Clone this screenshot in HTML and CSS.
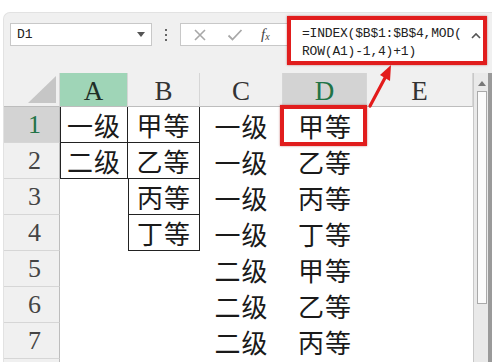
FILE: index.html
```
<!DOCTYPE html>
<html lang="zh">
<head>
<meta charset="utf-8">
<link rel="stylesheet" href="styles.css">
</head>
<body>
<div class="app">
  <div class="fbar">
    <div class="namebox"><span class="name">D1</span><span class="caret"></span></div>
    <div class="dots"><i></i><i></i><i></i></div>
    <div class="fxpart">
      <svg class="ic" width="14" height="14" viewBox="0 0 14 14"><path d="M2 2L12 12M12 2L2 12" stroke="#a8a8a8" stroke-width="1.6" fill="none"/></svg>
      <svg class="ic" width="16" height="14" viewBox="0 0 16 14"><path d="M1.5 7.5L5.5 11.5L14.5 2" stroke="#a8a8a8" stroke-width="1.8" fill="none"/></svg>
      <span class="fx">f<sub>x</sub></span>
    </div>
    <div class="formula">
      <div class="ftext">=INDEX($B$1:$B$4,MOD(<br>ROW(A1)-1,4)+1)</div>
      <svg class="up" width="10" height="7" viewBox="0 0 10 7"><path d="M1 6L5 2L9 6" stroke="#555" stroke-width="1.6" fill="none"/></svg>
    </div>
  </div>
  <div class="sheetwrap">
    <div class="sheet">
      <div class="corner"><span class="tri"></span></div>
      <div class="ch ch-a">A</div>
      <div class="ch">B</div>
      <div class="ch">C</div>
      <div class="ch ch-sel">D</div>
      <div class="ch">E</div>

      <div class="rh rh-sel">1</div>
      <div class="c bd bd-top">一级</div>
      <div class="c bd bd-top nl">甲等</div>
      <div class="c">一级</div>
      <div class="c mark">甲等</div>
      <div class="c"></div>

      <div class="rh">2</div>
      <div class="c bd">二级</div>
      <div class="c bd nl">乙等</div>
      <div class="c">一级</div>
      <div class="c">乙等</div>
      <div class="c"></div>

      <div class="rh">3</div>
      <div class="c"></div>
      <div class="c bd">丙等</div>
      <div class="c">一级</div>
      <div class="c">丙等</div>
      <div class="c"></div>

      <div class="rh">4</div>
      <div class="c"></div>
      <div class="c bd">丁等</div>
      <div class="c">一级</div>
      <div class="c">丁等</div>
      <div class="c"></div>

      <div class="rh">5</div>
      <div class="c"></div>
      <div class="c"></div>
      <div class="c">二级</div>
      <div class="c">甲等</div>
      <div class="c"></div>

      <div class="rh">6</div>
      <div class="c"></div>
      <div class="c"></div>
      <div class="c">二级</div>
      <div class="c">乙等</div>
      <div class="c"></div>

      <div class="rh">7</div>
      <div class="c"></div>
      <div class="c"></div>
      <div class="c">二级</div>
      <div class="c">丙等</div>
      <div class="c"></div>

      <div class="rh"></div>
      <div class="c"></div>
      <div class="c"></div>
      <div class="c"></div>
      <div class="c"></div>
      <div class="c"></div>
    </div>
    <div class="vscroll">
      <div class="sb-arrow"><svg width="8" height="5" viewBox="0 0 8 5"><path d="M0 5L4 0L8 5Z" fill="#777"/></svg></div>
      <div class="thumb"></div>
    </div>
  </div>
  <svg class="arrow" width="40" height="50" viewBox="0 0 40 50">
    <path d="M4 44L20 14" stroke="#e31b1b" stroke-width="3.2" fill="none" stroke-linecap="round"/>
    <path d="M25 3L14 13L24 19Z" fill="#e31b1b"/>
  </svg>
</div>
</body>
</html>
```
FILE: styles.css
```
* { box-sizing: border-box; }
html, body { margin: 0; padding: 0; }
body {
  width: 492px;
  height: 362px;
  overflow: hidden;
  background: #ffffff;
  font-family: "Liberation Serif", serif;
}
.app {
  position: relative;
  margin: 12px 0 0 3px;
  height: 350px;
  background: #f0f0f0;
  border-top-left-radius: 7px;
  border-top: 1px solid #e2e2e2;
  border-left: 1px solid #e2e2e2;
  overflow: hidden;
}
.fbar {
  height: 60px;
  display: flex;
  align-items: flex-start;
  padding: 0 0 0 6px;
}
.namebox {
  margin-top: 10px;
  width: 142px;
  height: 23px;
  background: #fff;
  border: 1px solid #c8c8c8;
  display: flex;
  align-items: center;
  justify-content: space-between;
  padding: 0 6px 0 6px;
}
.name {
  font-family: "Liberation Mono", monospace;
  font-size: 13px;
  color: #222;
}
.caret {
  width: 0; height: 0;
  border-left: 4px solid transparent;
  border-right: 4px solid transparent;
  border-top: 5px solid #555;
}
.dots {
  margin: 16px 0 0 0;
  width: 28px;
  display: flex;
  flex-direction: column;
  align-items: center;
  gap: 3px;
}
.dots i {
  display: block;
  width: 2px; height: 2px;
  background: #666;
}
.fxpart {
  margin-top: 10px;
  width: 107px;
  height: 23px;
  background: #fff;
  border: 1px solid #c8c8c8;
  border-right: none;
  display: flex;
  align-items: center;
  padding-left: 12px;
  gap: 20px;
}
.ic { display: block; }
.fx {
  font-family: "Liberation Serif", serif;
  font-style: italic;
  font-size: 15px;
  color: #444;
  margin-left: -2px;
}
.fx sub { font-size: 10px; vertical-align: -1px; }
.formula {
  position: relative;
  margin-top: 3px;
  width: 200px;
  height: 49px;
  background: #fff;
  border: 4px solid #e11d1d;
  box-shadow: 0 0 2px rgba(150,0,0,0.5);
  padding: 5px 0 0 11px;
}
.ftext {
  font-family: "Liberation Mono", monospace;
  font-size: 13px;
  line-height: 18px;
  color: #222;
  white-space: nowrap;
  letter-spacing: -0.2px;
}
.up {
  position: absolute;
  right: 2px;
  top: 12px;
}
.sheetwrap {
  display: flex;
  height: 290px;
}
.sheet {
  display: grid;
  grid-template-columns: 56px 68px 72px 83px 84px 106px;
  grid-template-rows: 34px repeat(8, 36px);
  background: #fff;
}
.corner {
  background: #f0f0f0;
  border-right: 1px solid #d6d6d6;
  border-bottom: 1px solid #bdbdbd;
  position: relative;
}
.tri {
  position: absolute;
  right: 3px;
  bottom: 3px;
  width: 0; height: 0;
  border-left: 28px solid transparent;
  border-bottom: 27px solid #c6c6c6;
}
.ch {
  background: #f0f0f0;
  border-right: 1px solid #d6d6d6;
  border-bottom: 1px solid #bdbdbd;
  display: flex;
  align-items: center;
  justify-content: center;
  font-family: "Liberation Serif", serif;
  font-size: 27px;
  color: #333;
  padding-top: 3px;
}
.ch-a { background: #9fd5b7; color: #1f2f26; }
.ch-sel { background: #d3d3d3; color: #217346; }
.rh {
  background: #f0f0f0;
  border-bottom: 1px solid #d6d6d6;
  border-right: 1px solid #bdbdbd;
  display: flex;
  align-items: center;
  justify-content: center;
  font-family: "Liberation Serif", serif;
  font-size: 26px;
  color: #444;
  padding-left: 6px;
}
.rh-sel { background: #d3d3d3; color: #217346; }
.c {
  display: flex;
  align-items: center;
  justify-content: center;
  font-family: "Noto Sans CJK SC", sans-serif;
  font-size: 26px;
  color: #1a1a1a;
  letter-spacing: 1px;
}
.bd {
  border-left: 1px solid #222;
  border-right: 1px solid #222;
  border-bottom: 1px solid #222;
}
.bd-top { border-top: none; }
.nl { border-left: none; }
.mark { position: relative; }
.mark::after {
  content: "";
  position: absolute;
  left: -3px; top: -2px; right: 0; bottom: -3px;
  border: 4px solid #e11d1d;
  box-shadow: 0 0 2px rgba(150,0,0,0.5);
}
.vscroll {
  width: 19px;
  background: #e9e9e9;
  border-left: 1px solid #c8c8c8;
  border-right: 4px solid #9a9a9a;
  padding: 0 1px 0 3px;
}
.sb-arrow {
  height: 16px;
  display: flex;
  align-items: center;
  justify-content: center;
  margin-top: 2px;
}
.thumb {
  height: 213px;
  background: #fbfbfb;
  border: 1px solid #a9a9a9;
}
.arrow {
  position: absolute;
  left: 362px;
  top: 49px;
}
```
